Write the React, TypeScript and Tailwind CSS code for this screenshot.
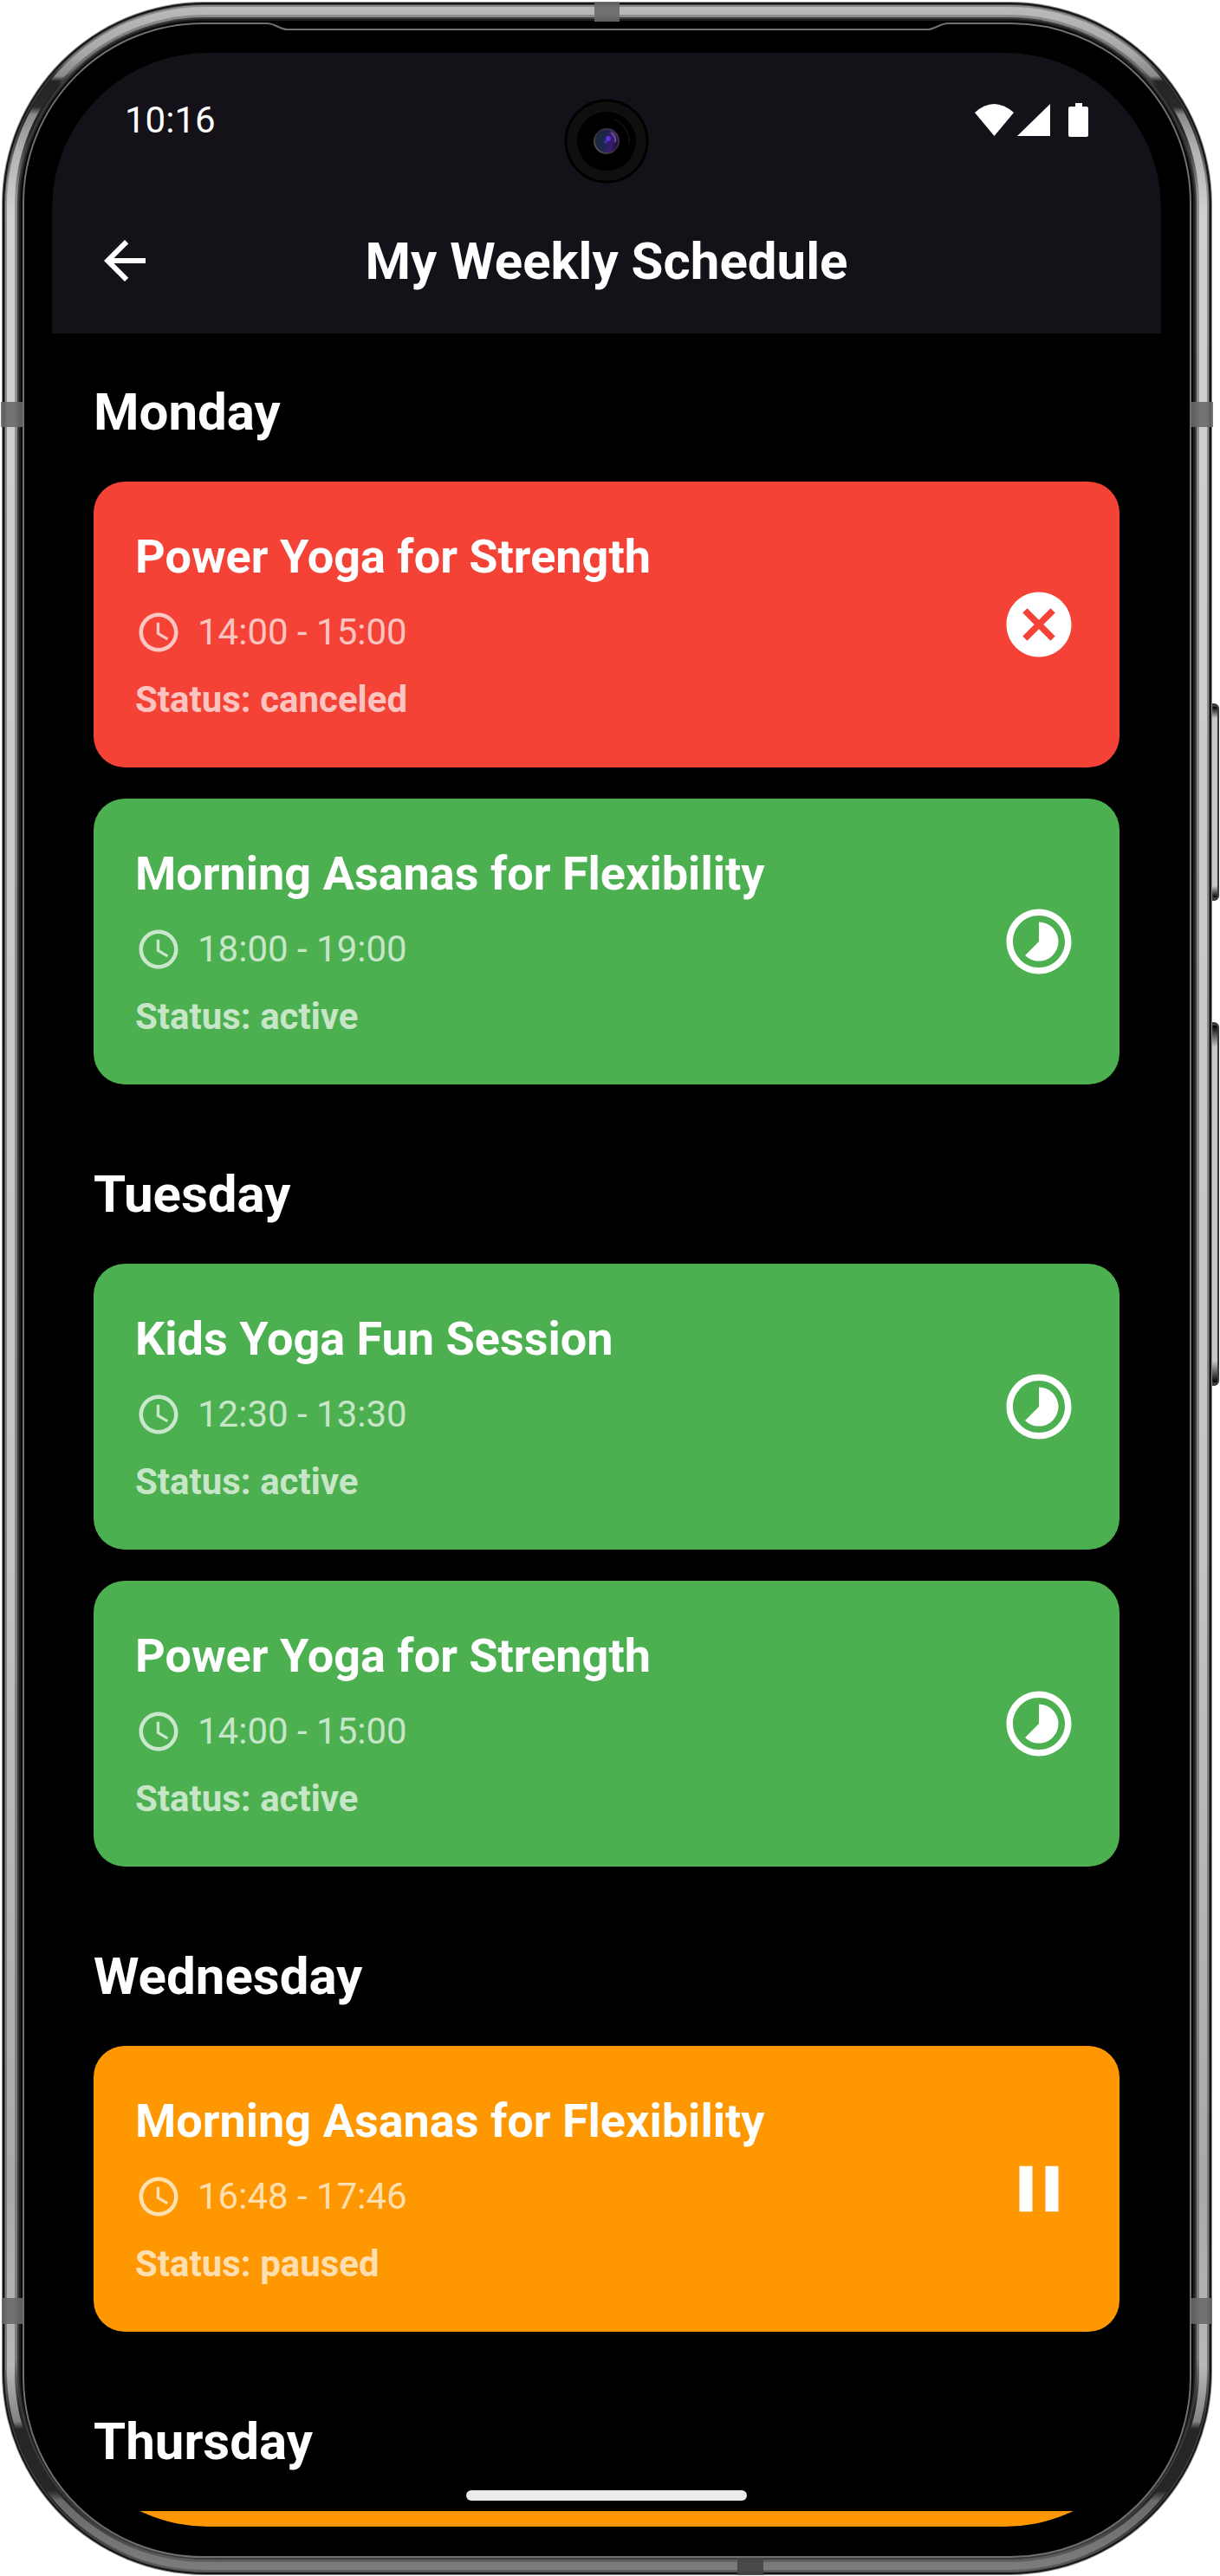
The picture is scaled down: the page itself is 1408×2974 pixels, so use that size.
import React from "react";
import { MdAccessTime, MdArrowBack, MdCancel, MdPause, MdTimelapse } from "react-icons/md";

type Status = "canceled" | "active" | "paused";

type Session = { title: string; time: string; status: Status };

type Day = { name: string; sessions: Session[] };

const days: Day[] = [
  {
    name: "Monday",
    sessions: [
      { title: "Power Yoga for Strength", time: "14:00 - 15:00", status: "canceled" },
      { title: "Morning Asanas for Flexibility", time: "18:00 - 19:00", status: "active" },
    ],
  },
  {
    name: "Tuesday",
    sessions: [
      { title: "Kids Yoga Fun Session", time: "12:30 - 13:30", status: "active" },
      { title: "Power Yoga for Strength", time: "14:00 - 15:00", status: "active" },
    ],
  },
  {
    name: "Wednesday",
    sessions: [{ title: "Morning Asanas for Flexibility", time: "16:48 - 17:46", status: "paused" }],
  },
];

const cardColors: Record<Status, string> = {
  canceled: "bg-[#f44336]",
  active: "bg-[#4caf50]",
  paused: "bg-[#ff9800]",
};

const statusIcons: Record<Status, React.ReactNode> = {
  canceled: <MdCancel className="size-[90px] shrink-0" aria-hidden="true" />,
  active: <MdTimelapse className="size-[90px] shrink-0" aria-hidden="true" />,
  paused: <MdPause className="size-[90px] shrink-0" aria-hidden="true" />,
};

// Each layer is drawn inside the previous one, from the outer edge to the glass.
const rings: { inset: number; color: string }[] = [
  { inset: 0, color: "#8a8a8a" },
  { inset: 1, color: "#141414" },
  { inset: 3, color: "#4a4a4a" },
  { inset: 4, color: "url(#metalDim)" },
  { inset: 6, color: "url(#metal)" },
  { inset: 15, color: "url(#metalDim)" },
  { inset: 18, color: "#3c3c3c" },
  { inset: 20, color: "#1e1e1e" },
  { inset: 22, color: "#000000" },
];

function PhoneFrame() {
  return (
    <svg
      className="absolute inset-0 h-full w-full"
      viewBox="0 0 1408 2974"
      preserveAspectRatio="none"
      aria-hidden="true"
    >
      <defs>
        <linearGradient id="metal" x1="0" y1="0" x2="0" y2="1">
          <stop offset="0" stopColor="#bababa" />
          <stop offset="0.018" stopColor="#a8a8a8" />
          <stop offset="0.027" stopColor="#8a8a8a" />
          <stop offset="0.029" stopColor="#242424" />
          <stop offset="0.039" stopColor="#2a2a2a" />
          <stop offset="0.042" stopColor="#8a8a8a" />
          <stop offset="0.055" stopColor="#b0b0b0" />
          <stop offset="0.08" stopColor="#d0d0d0" />
          <stop offset="0.6" stopColor="#c4c4c4" />
          <stop offset="0.85" stopColor="#a8a8a8" />
          <stop offset="0.92" stopColor="#b8b8b8" />
          <stop offset="0.942" stopColor="#848484" />
          <stop offset="0.945" stopColor="#262626" />
          <stop offset="0.969" stopColor="#262626" />
          <stop offset="0.973" stopColor="#6a6a6a" />
          <stop offset="1" stopColor="#7c7c7c" />
        </linearGradient>
        <linearGradient id="metalDim" x1="0" y1="0" x2="0" y2="1">
          <stop offset="0" stopColor="#8c8c8c" />
          <stop offset="0.022" stopColor="#6c6c6c" />
          <stop offset="0.028" stopColor="#242424" />
          <stop offset="0.045" stopColor="#242424" />
          <stop offset="0.07" stopColor="#909090" />
          <stop offset="0.92" stopColor="#7c7c7c" />
          <stop offset="0.94" stopColor="#262626" />
          <stop offset="0.975" stopColor="#262626" />
          <stop offset="1" stopColor="#606060" />
        </linearGradient>
        <linearGradient id="sideButton" x1="0" y1="0" x2="0" y2="1">
          <stop offset="0" stopColor="#000000" />
          <stop offset="0.06" stopColor="#c8c8c8" />
          <stop offset="0.94" stopColor="#c8c8c8" />
          <stop offset="1" stopColor="#000000" />
        </linearGradient>
      </defs>
      <rect x="1394" y="812" width="13" height="228" rx="6" fill="#3a3a3a" />
      <rect x="1399" y="816" width="6" height="220" rx="2" fill="url(#sideButton)" />
      <rect x="1394" y="1180" width="13" height="420" rx="6" fill="#3a3a3a" />
      <rect x="1399" y="1184" width="6" height="412" rx="2" fill="url(#sideButton)" />
      {rings.map(({ inset, color }) => (
        <rect
          key={inset}
          x={2 + inset}
          y={2 + inset}
          width={1397 - 2 * inset}
          height={2971 - 2 * inset}
          rx={234 - inset}
          fill={color}
        />
      ))}
      <g fill="#686a68" fillOpacity="0.9">
        <rect x="686" y="2" width="29" height="23" />
        <rect x="1" y="464" width="25" height="29" />
        <rect x="1375" y="464" width="25" height="29" />
        <rect x="2" y="2653" width="24" height="30" />
        <rect x="1375" y="2653" width="24" height="30" />
        <rect x="851" y="2953" width="30" height="20" fill="#444444" />
      </g>
      <path
        d="M234 27H308C318 27 322 34 332 34H1070C1080 34 1084 27 1094 27H1166A207 207 0 0 1 1374 234V2745A207 207 0 0 1 1166 2952H234A207 207 0 0 1 27 2745V234A207 207 0 0 1 234 27Z"
        fill="#000000"
        stroke="#707070"
        strokeWidth="2"
      />
    </svg>
  );
}

function Camera() {
  return (
    <svg className="absolute top-[53px] left-1/2 size-[98px] -translate-x-1/2" viewBox="0 0 98 98" aria-hidden="true">
      <defs>
        <linearGradient id="lens" x1="0" y1="0.4" x2="1" y2="0.6">
          <stop offset="0" stopColor="#1c2a34" />
          <stop offset="0.45" stopColor="#1e2450" />
          <stop offset="0.75" stopColor="#3a1a70" />
          <stop offset="1" stopColor="#1a0c2c" />
        </linearGradient>
        <linearGradient id="lensRim" x1="0" y1="1" x2="1" y2="0">
          <stop offset="0" stopColor="#5c5c5c" />
          <stop offset="0.5" stopColor="#2a2a2a" />
          <stop offset="1" stopColor="#4a3a5c" />
        </linearGradient>
      </defs>
      <circle cx="49" cy="49" r="47" fill="#0f0f0f" stroke="#000000" strokeWidth="3" />
      <circle cx="49" cy="49" r="34" fill="#000000" />
      <path d="M58 24A27 27 0 0 1 75 52" fill="none" stroke="#0e0e10" strokeWidth="2" />
      <circle cx="49" cy="49" r="14" fill="url(#lens)" stroke="url(#lensRim)" strokeWidth="2" />
      <circle cx="51" cy="46" r="3" fill="#5a34d8" />
      <circle cx="48" cy="50" r="2" fill="#3c2cb0" />
      <path d="M54 39A11 11 0 0 1 59 50" fill="none" stroke="#7a4a9c" strokeWidth="2" />
    </svg>
  );
}

function StatusBar() {
  return (
    <div className="relative flex h-[156px] items-center justify-between px-21 text-[42px] leading-[60px]">
      <span>10:16</span>
      <Camera />
      <svg className="h-10 w-[132px]" viewBox="0 0 132 40" fill="currentColor" role="img" aria-label="Wi-Fi, signal and battery">
        <path d="M1 11Q23 -9 46 11L23.500 38Z" />
        <path d="M50 38L88 1V38Z" />
        <path d="M117 0h8v4h5a2 2 0 0 1 2 2v31a2 2 0 0 1-2 2h-19a2 2 0 0 1-2-2V6a2 2 0 0 1 2-2h6Z" />
      </svg>
    </div>
  );
}

function SessionCard({ title, time, status }: Session) {
  return (
    <article className={`flex items-center justify-between rounded-[36px] p-12 ${cardColors[status]}`}>
      <div className="flex flex-col gap-[18px]">
        <h3 className="text-[54px] leading-[78px] font-bold">{title}</h3>
        <p className="flex items-center gap-[18px] text-[42px] leading-[60px] text-white/70">
          <MdAccessTime className="size-[54px]" aria-hidden="true" />
          {time}
        </p>
        <p className="text-[42px] leading-[60px] font-bold text-white/70">Status: {status}</p>
      </div>
      {statusIcons[status]}
    </article>
  );
}

function DayHeading({ children }: { children: React.ReactNode }) {
  return <h2 className="mb-[38px] text-[60px] leading-[85px] font-bold">{children}</h2>;
}

export default function App() {
  return (
    <div className="min-h-screen bg-white font-[Roboto,sans-serif] text-white">
      <div className="relative pt-[61px] pr-[68px] pb-[57px] pl-[60px]">
        <PhoneFrame />
        <div className="relative overflow-hidden rounded-[180px] bg-black">
          <header className="bg-[#141118]">
            <StatusBar />
            <div className="relative flex h-[168px] items-center justify-center">
              <button type="button" aria-label="Back" className="absolute left-12">
                <MdArrowBack className="size-[72px]" />
              </button>
              <h1 className="text-[60px] leading-[85px] font-bold">My Weekly Schedule</h1>
            </div>
          </header>
          <main className="flex flex-col gap-21 px-12 pt-12">
            {days.map((day) => (
              <section key={day.name}>
                <DayHeading>{day.name}</DayHeading>
                <div className="flex flex-col gap-9">
                  {day.sessions.map((session) => (
                    <SessionCard key={session.title} {...session} />
                  ))}
                </div>
              </section>
            ))}
            <section>
              <DayHeading>Thursday</DayHeading>
              <div className="h-[18px] bg-[#ff9800]" />
            </section>
          </main>
          <div className="absolute bottom-[30px] left-1/2 h-3 w-[324px] -translate-x-1/2 rounded-full bg-[#ebebeb]" />
        </div>
      </div>
    </div>
  );
}
